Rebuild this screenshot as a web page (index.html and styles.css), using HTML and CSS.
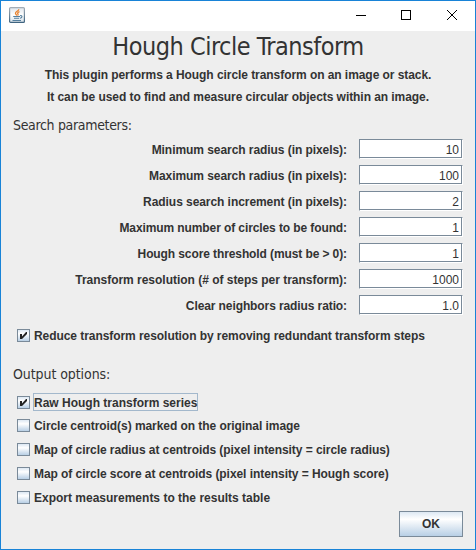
FILE: index.html
```html
<!DOCTYPE html>
<html lang="en">
<head>
<meta charset="utf-8">
<title>Hough Circle Transform</title>
<link rel="stylesheet" href="styles.css">
</head>
<body>
<div class="window">
  <header class="titlebar">
    <svg class="app-icon" width="16" height="16" viewBox="0 0 16 16">
      <defs><linearGradient id="tile" x1="0" y1="0" x2="0" y2="1"><stop offset="0" stop-color="#dfe6ec"/><stop offset=".5" stop-color="#fff"/><stop offset="1" stop-color="#d5e0e8"/></linearGradient>
      <linearGradient id="edge" x1="0" y1="0" x2="0" y2="1"><stop offset="0" stop-color="#a3adb7"/><stop offset="1" stop-color="#3f6480"/></linearGradient></defs>
      <rect x=".6" y=".6" width="14.8" height="14.8" rx="1" fill="url(#tile)" stroke="url(#edge)" stroke-width="1.2"/>
      <path d="M9.8 2.2C10 4 6.300 4.600 6.500 6.300C6.600 7.200 7.500 7.500 7.700 8.600M10.500 4.700C8.500 5.500 8.300 6.300 9 7.100C9.300 7.700 9 8 8.600 8.500" fill="none" stroke="#e8822e" stroke-width="1.300"/>
      <path d="M4.200 9.500H11M5 11.300H10.200M3.500 13.500H12M11 8.700C13.500 8 13.800 10.500 11 11.300" fill="none" stroke="#56809f" stroke-width="1.100"/>
    </svg>
    <svg class="controls" width="106" height="12" viewBox="0 0 106 12" fill="none" stroke="#000">
      <path d="M0 6.500H10"/>
      <rect x="45.500" y="1.500" width="9" height="9"/>
      <path d="M91 1L101 11M101 1L91 11"/>
    </svg>
  </header>
  <main class="content">
    <h1 class="title">Hough Circle Transform</h1>
    <p class="intro">This plugin performs a Hough circle transform on an image or stack.</p>
    <p class="intro intro-second">It can be used to find and measure circular objects within an image.</p>
    <h2 class="section">Search parameters:</h2>
    <div class="fields">
      <div class="row"><span class="label">Minimum search radius (in pixels):</span><span class="input">10</span></div>
      <div class="row"><span class="label">Maximum search radius (in pixels):</span><span class="input">100</span></div>
      <div class="row"><span class="label">Radius search increment (in pixels):</span><span class="input">2</span></div>
      <div class="row"><span class="label tight">Maximum number of circles to be found:</span><span class="input">1</span></div>
      <div class="row"><span class="label tight">Hough score threshold (must be &gt; 0):</span><span class="input">1</span></div>
      <div class="row"><span class="label natural">Transform resolution (# of steps per transform):</span><span class="input">1000</span></div>
      <div class="row"><span class="label tight">Clear neighbors radius ratio:</span><span class="input">1.0</span></div>
    </div>
    <div class="check reduce"><span class="box"><svg width="11" height="11" viewBox="0 0 11 11"><path class="tick" d="M2 4H4V6.500L8 2H9V4L4 9H2Z"/></svg></span><span class="text">Reduce transform resolution by removing redundant transform steps</span></div>
    <h2 class="section output">Output options:</h2>
    <div class="options">
      <div class="check first"><span class="box"><svg width="11" height="11" viewBox="0 0 11 11"><path class="tick" d="M2 4H4V6.500L8 2H9V4L4 9H2Z"/></svg></span><span class="text focused loose">Raw Hough transform series</span></div>
      <div class="check"><span class="box"></span><span class="text">Circle centroid(s) marked on the original image</span></div>
      <div class="check"><span class="box"></span><span class="text">Map of circle radius at centroids (pixel intensity = circle radius)</span></div>
      <div class="check"><span class="box"></span><span class="text">Map of circle score at centroids (pixel intensity = Hough score)</span></div>
      <div class="check"><span class="box"></span><span class="text loose">Export measurements to the results table</span></div>
    </div>
    <button class="ok">OK</button>
  </main>
</div>
</body>
</html>
```
FILE: styles.css
```css
* { box-sizing: border-box; }
body { margin: 0; font: bold 12px/16px "Liberation Sans", Arial, sans-serif; color: #333; letter-spacing: -0.06px; }
.window { width: 476px; height: 550px; border: 1px solid #1883d7; background: #eee; display: flex; flex-direction: column; }
.titlebar { height: 30px; background: #fff; display: flex; justify-content: space-between; padding: 6px 8px 0; }
.controls { margin: 2px 5px 0 0; }
.content { flex: 1; display: flex; flex-direction: column; padding: 0 12px; }
.title { margin: 0; font: 25px/31px "DejaVu Sans Condensed", "DejaVu Sans", sans-serif; font-stretch: condensed; letter-spacing: -0.5px; text-align: center; white-space: nowrap; }
.intro { margin: 5px 0 0; text-align: center; white-space: nowrap; }
.intro-second { margin-top: 6px; }
.section { margin: 11px 0 0; font: 14px/18px "DejaVu Sans Condensed", "DejaVu Sans", sans-serif; font-stretch: condensed; letter-spacing: -0.33px; }
.output.section { margin-top: 20px; letter-spacing: -0.08px; }
.fields { display: flex; flex-direction: column; gap: 6px; margin-top: 5px; }
.row { display: flex; justify-content: flex-end; align-items: center; height: 20px; gap: 12px; white-space: nowrap; }
.label { line-height: 18px; padding-top: 2px; }
.tight { letter-spacing: -0.1px; }
.natural { letter-spacing: -0.02px; }
.loose { letter-spacing: 0; }
.input { width: 104px; height: 20px; padding: 2px 3px 0 0; background: #fff; border: 1px solid #7a8a99; border-right-color: #fff; border-bottom-color: #fff; box-shadow: inset -1px -1px #7a8a99, inset 1px 1px #fff; text-align: right; font-weight: normal; letter-spacing: 0; }
.check { display: flex; align-items: flex-start; height: 18px; padding-left: 4px; gap: 3px; white-space: nowrap; }
.reduce { margin-top: 12px; }
.options { display: flex; flex-direction: column; gap: 6px; margin-top: 10px; }
.box { display: block; width: 13px; height: 13px; margin-top: 2px; border: 1px solid #7a8a99; background: linear-gradient(#dde8f3, #fff 35%, #b8cfe5); }
.first .box { margin-top: 3px; }
.box svg { display: block; }
.tick { fill: #222; }
.text { height: 18px; border: 1px solid transparent; line-height: 16px; }
.focused { border-color: #a3b8cc; line-height: 18px; }
.ok { align-self: flex-end; width: 64px; height: 26px; margin-top: 4px; padding: 0; border: 1px solid #7a8a99; background: linear-gradient(#dde8f3, #fff 30%, #b8cfe5); color: #333; font: inherit; }
```
